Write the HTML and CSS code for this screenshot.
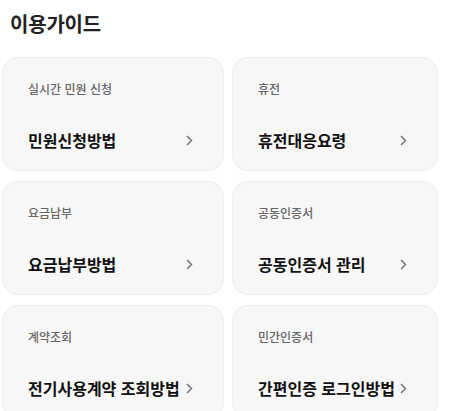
FILE: index.html
```html
<!DOCTYPE html>
<html lang="ko">
<head>
  <meta charset="UTF-8" />
  <meta name="viewport" content="width=device-width, initial-scale=1.0" />
  <title>이용가이드</title>
  <link rel="stylesheet" href="styles.css">
</head>
<body>

  <h2 class="guide-title">이용가이드</h2>

  <div class="guide-grid">
    <a class="guide-card" href="#">
      <span class="guide-sub">실시간 민원 신청</span>
      <span class="guide-main">
        <span>민원신청방법</span>
        <svg class="chev" width="7" height="11" viewBox="0 0 7 11"><path d="M1 1l4.5 4.5L1 10" /></svg>
      </span>
    </a>
    <a class="guide-card" href="#">
      <span class="guide-sub">휴전</span>
      <span class="guide-main">
        <span>휴전대응요령</span>
        <svg class="chev" width="7" height="11" viewBox="0 0 7 11"><path d="M1 1l4.5 4.5L1 10" /></svg>
      </span>
    </a>
    <a class="guide-card" href="#">
      <span class="guide-sub">요금납부</span>
      <span class="guide-main">
        <span>요금납부방법</span>
        <svg class="chev" width="7" height="11" viewBox="0 0 7 11"><path d="M1 1l4.5 4.5L1 10" /></svg>
      </span>
    </a>
    <a class="guide-card" href="#">
      <span class="guide-sub">공동인증서</span>
      <span class="guide-main">
        <span>공동인증서 관리</span>
        <svg class="chev" width="7" height="11" viewBox="0 0 7 11"><path d="M1 1l4.5 4.5L1 10" /></svg>
      </span>
    </a>
    <a class="guide-card" href="#">
      <span class="guide-sub">계약조회</span>
      <span class="guide-main">
        <span>전기사용계약 조회방법</span>
        <svg class="chev" width="7" height="11" viewBox="0 0 7 11"><path d="M1 1l4.5 4.5L1 10" /></svg>
      </span>
    </a>
    <a class="guide-card" href="#">
      <span class="guide-sub">민간인증서</span>
      <span class="guide-main">
        <span>간편인증 로그인방법</span>
        <svg class="chev" width="7" height="11" viewBox="0 0 7 11"><path d="M1 1l4.5 4.5L1 10" /></svg>
      </span>
    </a>
  </div>

</body>
</html>
```

FILE: styles.css
```css
body {
  font-family: "Noto Sans CJK KR", "Noto Sans", sans-serif;
  margin: 0;
  padding: 0 2px;
  background: #fff;
  color: #111;
}

.guide-title {
  font-size: 20px;
  font-weight: 700;
  line-height: 28px;
  margin: 10px 0 0 8px;
  color: #222;
  letter-spacing: -0.2px;
}

.guide-grid {
  display: grid;
  grid-template-columns: 222px 206px;
  grid-auto-rows: 114px;
  column-gap: 8px;
  row-gap: 10px;
  margin-top: 19px;
}

.guide-card {
  display: flex;
  flex-direction: column;
  justify-content: space-between;
  box-sizing: border-box;
  padding: 22px 30px 18px 25px;
  background: #f7f7f7;
  border: 1px solid #ececec;
  border-radius: 16px;
  text-decoration: none;
  color: inherit;
}

.guide-sub {
  font-size: 12px;
  font-weight: 500;
  line-height: 18px;
  color: #666;
}

.guide-main {
  display: flex;
  align-items: center;
  justify-content: space-between;
  font-size: 16px;
  font-weight: 700;
  line-height: 24px;
  color: #111;
  white-space: nowrap;
}

.chev {
  flex-shrink: 0;
  margin-left: 4px;
}

.chev path {
  fill: none;
  stroke: #777;
  stroke-width: 1.5;
}
```
